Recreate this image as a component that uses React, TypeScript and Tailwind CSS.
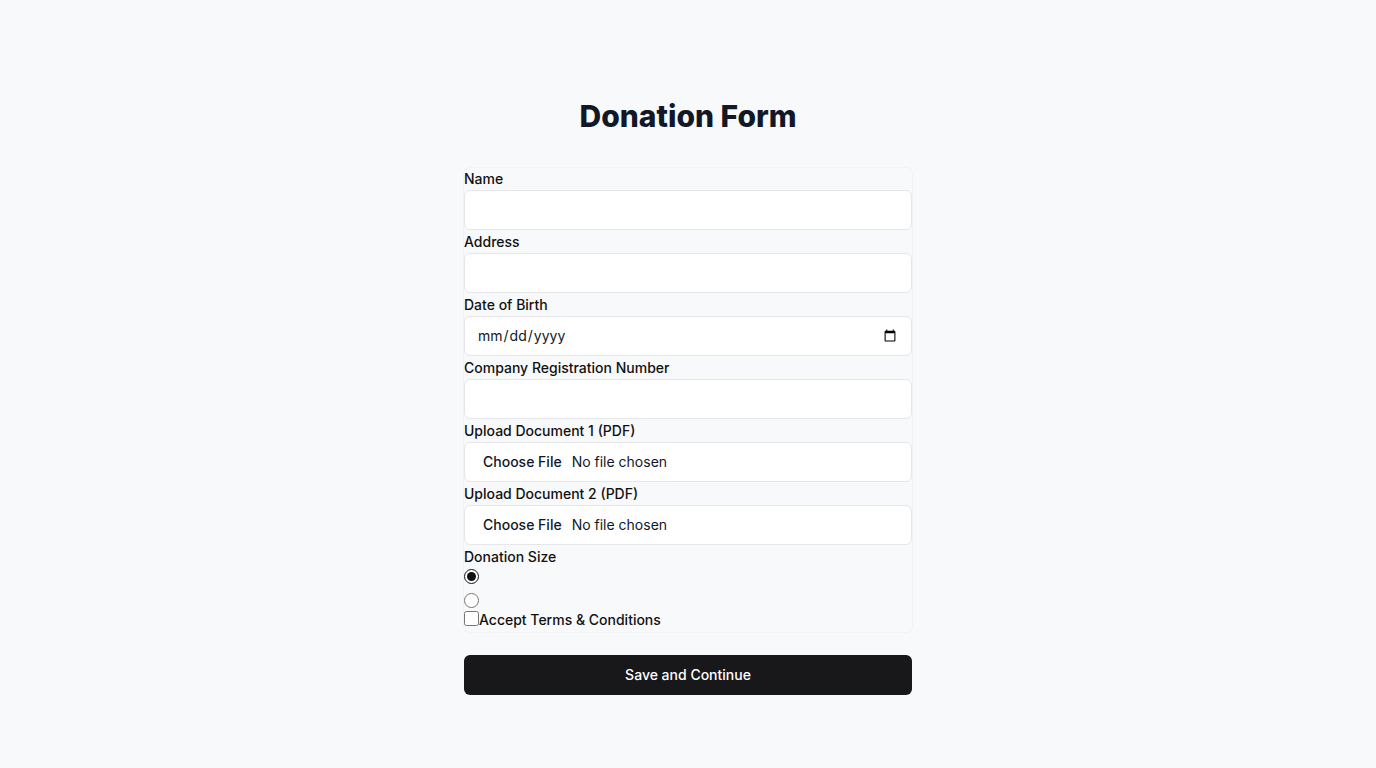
import React from "react";

const baseCls =
  "block h-10 w-full rounded-md border border-[#e4e6ea] bg-white px-3 text-sm text-gray-900 outline-none";

const inputCls = baseCls + " py-2";

const fileCls =
  baseCls +
  " pt-[9px] pb-[7px] file:mr-1 file:px-1.5 file:border-0 file:bg-transparent file:text-sm file:font-medium file:text-gray-900";

function Field({ label, children }: { label: string; children: React.ReactNode }) {
  return (
    <div className="flex flex-col">
      <label className="block h-[21px] pt-px text-sm font-medium leading-5 text-[#111111] mb-px">{label}</label>
      {children}
    </div>
  );
}

export default function App() {
  return (
    <div
      className="min-h-screen w-full bg-[#f8f9fb] pt-[98px]"
      style={{ fontFamily: "Inter, 'Noto Sans', sans-serif" }}
    >
      <div className="mx-auto w-[448px]">
        <h1 className="text-center text-3xl font-extrabold leading-9 text-[#111827]">Donation Form</h1>
        <div className="mt-[34px] rounded-md bg-[#f8f9fb] shadow-[0_0_0_1px_#f1f3f5]">
          <div className="flex flex-col gap-px">
            <Field label="Name">
              <input type="text" className={inputCls} />
            </Field>
            <Field label="Address">
              <input type="text" className={inputCls} />
            </Field>
            <Field label="Date of Birth">
              <input type="date" className={inputCls} />
            </Field>
            <Field label="Company Registration Number">
              <input type="text" className={inputCls} />
            </Field>
            <Field label="Upload Document 1 (PDF)">
              <input type="file" className={fileCls} />
            </Field>
            <Field label="Upload Document 2 (PDF)">
              <input type="file" className={fileCls} />
            </Field>
            <div className="flex flex-col">
              <label className="block h-[21px] pt-px text-sm font-medium leading-5 text-[#111111]">Donation Size</label>
              <div className="h-[23px] pt-[2px]">
                <input type="radio" name="size" defaultChecked className="m-0 h-[15px] w-[15px] accent-[#111111] block" />
              </div>
              <div className="h-5 pt-[3px]">
                <input type="radio" name="size" className="m-0 h-[15px] w-[15px] block" />
              </div>
              <div className="flex items-start h-5 mb-0.5">
                <input type="checkbox" className="m-0 mt-px h-[15px] w-[15px] block" />
                <span className="text-sm font-medium leading-5 text-[#111111]">Accept Terms &amp; Conditions</span>
              </div>
            </div>
          </div>
        </div>
        <button className="mt-[23px] flex h-10 w-full items-center justify-center rounded-md bg-[#18181b] text-sm font-medium text-white">
          Save and Continue
        </button>
      </div>
    </div>
  );
}
